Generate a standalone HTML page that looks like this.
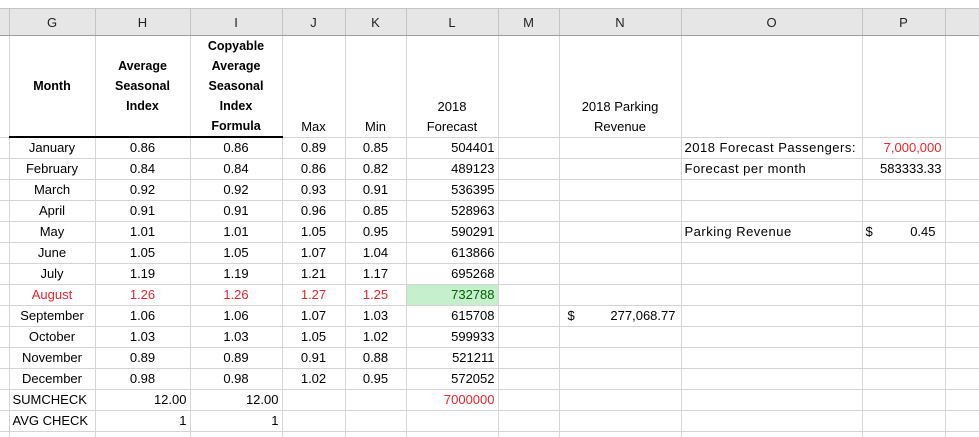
<!DOCTYPE html>
<html><head><meta charset="utf-8"><style>
html,body{margin:0;padding:0;background:#fff;width:979px;height:437px;overflow:hidden}
body{font-family:"Liberation Sans",sans-serif;font-size:13px;color:#000;position:relative}
table{position:absolute;left:0;top:8px;border-collapse:collapse;table-layout:fixed;width:1010px}
td{border:1px solid #d4d4d4;padding:0 3px;height:20px;line-height:20px;white-space:nowrap;overflow:hidden;box-sizing:border-box}
td:first-child{border-left:none}
tr.hd td{background:#e6e6e6;border-color:#c4c4c4;border-top:1px solid #c4c4c4;border-bottom:1px solid #9f9f9f;height:27px;text-align:center;font-size:13px;color:#222;line-height:14px;padding-top:7px;vertical-align:top}
tr.h1 td{height:101px;vertical-align:bottom;text-align:center;line-height:20px;padding-bottom:0}
.b{font-weight:bold;font-size:12.5px}
.c{text-align:center}.r{text-align:right}
.red{color:#e3262c}
.g{background:#c6efce;color:#006100}
.ul{border-bottom:2px solid #000 !important}
.o{letter-spacing:0.5px}
</style></head><body>
<table>
<colgroup><col style="width:9px"><col style="width:86px"><col style="width:95px"><col style="width:92px"><col style="width:63px"><col style="width:61px"><col style="width:92px"><col style="width:61px"><col style="width:122px"><col style="width:181px"><col style="width:83px"><col style="width:65px"></colgroup>
<tr class="hd"><td></td><td>G</td><td>H</td><td>I</td><td>J</td><td>K</td><td>L</td><td>M</td><td>N</td><td>O</td><td>P</td><td></td></tr>
<tr class="h1"><td></td><td class="b ul" style="vertical-align:middle">Month</td><td class="b ul" style="vertical-align:middle">Average<br>Seasonal<br>Index</td><td class="b ul">Copyable<br>Average<br>Seasonal<br>Index<br>Formula</td><td>Max</td><td>Min</td><td>2018<br>Forecast</td><td></td><td>2018 Parking<br>Revenue</td><td></td><td></td><td></td></tr>
<tr><td></td><td class="c">January</td><td class="c">0.86</td><td class="c">0.86</td><td class="c">0.89</td><td class="c">0.85</td><td class="r">504401</td><td></td><td></td><td class="o">2018 Forecast Passengers:</td><td class="r red">7,000,000</td><td></td></tr>
<tr><td></td><td class="c">February</td><td class="c">0.84</td><td class="c">0.84</td><td class="c">0.86</td><td class="c">0.82</td><td class="r">489123</td><td></td><td></td><td class="o">Forecast per month</td><td class="r">583333.33</td><td></td></tr>
<tr><td></td><td class="c">March</td><td class="c">0.92</td><td class="c">0.92</td><td class="c">0.93</td><td class="c">0.91</td><td class="r">536395</td><td></td><td></td><td></td><td></td><td></td></tr>
<tr><td></td><td class="c">April</td><td class="c">0.91</td><td class="c">0.91</td><td class="c">0.96</td><td class="c">0.85</td><td class="r">528963</td><td></td><td></td><td></td><td></td><td></td></tr>
<tr><td></td><td class="c">May</td><td class="c">1.01</td><td class="c">1.01</td><td class="c">1.05</td><td class="c">0.95</td><td class="r">590291</td><td></td><td></td><td class="o">Parking Revenue</td><td><span>$</span><span style="float:right;margin-right:6px">0.45</span></td><td></td></tr>
<tr><td></td><td class="c">June</td><td class="c">1.05</td><td class="c">1.05</td><td class="c">1.07</td><td class="c">1.04</td><td class="r">613866</td><td></td><td></td><td></td><td></td><td></td></tr>
<tr><td></td><td class="c">July</td><td class="c">1.19</td><td class="c">1.19</td><td class="c">1.21</td><td class="c">1.17</td><td class="r">695268</td><td></td><td></td><td></td><td></td><td></td></tr>
<tr class="red"><td></td><td class="c">August</td><td class="c">1.26</td><td class="c">1.26</td><td class="c">1.27</td><td class="c">1.25</td><td class="r g">732788</td><td></td><td></td><td></td><td></td><td></td></tr>
<tr><td></td><td class="c">September</td><td class="c">1.06</td><td class="c">1.06</td><td class="c">1.07</td><td class="c">1.03</td><td class="r">615708</td><td></td><td style="padding-left:8px"><span>$</span><span style="float:right;margin-right:2px">277,068.77</span></td><td></td><td></td><td></td></tr>
<tr><td></td><td class="c">October</td><td class="c">1.03</td><td class="c">1.03</td><td class="c">1.05</td><td class="c">1.02</td><td class="r">599933</td><td></td><td></td><td></td><td></td><td></td></tr>
<tr><td></td><td class="c">November</td><td class="c">0.89</td><td class="c">0.89</td><td class="c">0.91</td><td class="c">0.88</td><td class="r">521211</td><td></td><td></td><td></td><td></td><td></td></tr>
<tr><td></td><td class="c">December</td><td class="c">0.98</td><td class="c">0.98</td><td class="c">1.02</td><td class="c">0.95</td><td class="r">572052</td><td></td><td></td><td></td><td></td><td></td></tr>
<tr><td></td><td>SUMCHECK</td><td class="r">12.00</td><td class="r">12.00</td><td></td><td></td><td class="r red">7000000</td><td></td><td></td><td></td><td></td><td></td></tr>
<tr><td></td><td>AVG CHECK</td><td class="r">1</td><td class="r">1</td><td></td><td></td><td></td><td></td><td></td><td></td><td></td><td></td></tr>
<tr><td></td><td></td><td></td><td></td><td></td><td></td><td></td><td></td><td></td><td></td><td></td><td></td></tr>
</table>
</body></html>
